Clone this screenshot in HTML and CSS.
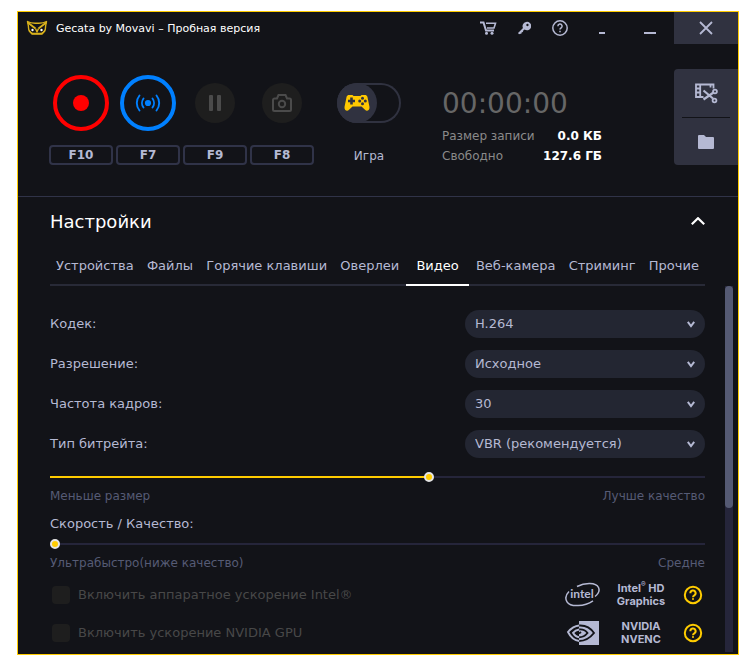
FILE: index.html
```
<!DOCTYPE html>
<html lang="ru">
<head>
<meta charset="utf-8">
<title>Gecata by Movavi – Пробная версия</title>
<link rel="stylesheet" href="styles.css">
</head>
<body>
<main class="window">
  <header class="titlebar">
    <svg class="logo" width="22" height="16" viewBox="0 0 22 16" fill="none" stroke="#d9b21c" stroke-width="1.4" stroke-linejoin="round">
      <path d="M1.500 1.500C5 3.600 7.500 3.200 11 3.200s6 .4 9.500-1.700C20 4 19.500 5.500 19.500 7.500c0 3-1.500 5-4 6H6.500c-2.500-1-4-3-4-6C2.500 5.500 2 4 1.500 1.500z"/>
      <path d="M1.700 2.500l7.800 6M20.300 2.500l-7.800 6" stroke-width="1.800"/>
      <path d="M9.500 8.500L11 12l1.500-3.500M3 10.500l3 3.500h10l3-3.500"/>
      <circle cx="6.500" cy="10" r="1.200" fill="#fff" stroke="none"/>
      <circle cx="15.500" cy="10" r="1.200" fill="#fff" stroke="none"/>
    </svg>
    <h1 class="app-name">Gecata by Movavi – Пробная версия</h1>
    <nav class="window-tools">
      <button class="tool" aria-label="Купить"><svg width="18" height="16" viewBox="0 0 18 16" fill="none" stroke="currentColor" stroke-width="2"><path d="M1 2.500h3.500l2.500 8h8"/><path d="M7 3.300h9.500L15 8H8" stroke-width="1.600"/><circle cx="7.500" cy="13.300" r="1.500" fill="currentColor" stroke="none"/><circle cx="13" cy="13.300" r="1.500" fill="currentColor" stroke="none"/></svg></button>
      <button class="tool" aria-label="Активация"><svg width="14" height="14" viewBox="0 0 14 14"><path fill="currentColor" fill-rule="evenodd" d="M9 1a4.200 4.200 0 1 1-1.400 7.500L5.800 10l.4 1-1.500.3-.2 1.300-2.500.6L1 12l5-5A4.200 4.200 0 0 1 9 1zm1.400 1.800a1.200 1.200 0 1 0 .1 0z"/></svg></button>
      <button class="tool" aria-label="Справка"><svg width="18" height="18" viewBox="0 0 18 18" fill="none" stroke="currentColor" stroke-width="1.500"><circle cx="9" cy="9" r="7.200"/><path d="M6.900 7.200a2.100 2.100 0 1 1 3.100 1.800c-.8.400-1 .8-1 1.600M9 11.800v1.500"/></svg></button>
      <button class="tool" aria-label="Мини-режим"><svg width="14" height="14" viewBox="0 0 14 14"><path fill="currentColor" d="M4 11h6v2H4z"/></svg></button>
      <button class="tool" aria-label="Свернуть"><svg width="14" height="14" viewBox="0 0 14 14"><path fill="currentColor" d="M1 11h12v2H1z"/></svg></button>
    </nav>
    <button class="close" aria-label="Закрыть"><svg width="14" height="14" viewBox="0 0 14 14" fill="none" stroke="currentColor" stroke-width="1.800"><path d="M1 1l12 12M13 1L1 13"/></svg></button>
  </header>

  <section class="recorder">
    <div class="actions">
      <div class="action">
        <button class="round record" aria-label="Запись"><svg width="16" height="16" viewBox="0 0 16 16"><circle cx="8" cy="8" r="8" fill="currentColor"/></svg></button>
        <button class="key">F10</button>
      </div>
      <div class="action">
        <button class="round stream" aria-label="Стрим"><svg width="26" height="20" viewBox="0 0 26 20" fill="none" stroke="currentColor" stroke-width="1.900" stroke-linecap="round"><circle cx="13" cy="10" r="3.100" fill="currentColor" stroke="none"/><path d="M8.500 5.500c-2 2.600-2 6.400 0 9M17.500 5.500c2 2.600 2 6.400 0 9M4.500 2.500c-3.600 4.400-3.600 10.600 0 15M21.500 2.500c3.600 4.400 3.600 10.600 0 15"/></svg></button>
        <button class="key">F7</button>
      </div>
      <div class="action">
        <button class="round muted" aria-label="Пауза"><svg width="12" height="16" viewBox="0 0 12 16" fill="currentColor"><rect width="4" height="16" rx="1"/><rect x="8" width="4" height="16" rx="1"/></svg></button>
        <button class="key">F9</button>
      </div>
      <div class="action">
        <button class="round muted" aria-label="Снимок"><svg width="20" height="18" viewBox="0 0 20 18" fill="none" stroke="currentColor" stroke-width="2"><path d="M1 6a1.500 1.500 0 0 1 1.500-1.500H5L6.500 1h7L15 4.500h2.500A1.500 1.500 0 0 1 19 6v9.500a1.500 1.500 0 0 1-1.500 1.500h-15A1.500 1.500 0 0 1 1 15.500z"/><circle cx="10" cy="10" r="3.200"/></svg></button>
        <button class="key">F8</button>
      </div>
    </div>
    <div class="mode">
      <button class="toggle" role="switch" aria-checked="false" aria-labelledby="mode-name"><span class="knob"><svg width="26" height="18" viewBox="0 0 26 18"><path fill="#ffc800" d="M5 1h3.500l1 1h7l1-1H21c1 0 2 .6 2.400 1.800L25.500 13c.4 3-2.500 5-4.500 2.800L17.500 12.500h-9L5 15.800C3 18 .1 16 .5 13L2.600 2.800C3 1.600 4 1 5 1z"/><path d="M7.500 3.500v7M4 7h7" stroke="#303240" stroke-width="2.600"/><g fill="#303240"><circle cx="18.500" cy="4.200" r="1.500"/><circle cx="18.500" cy="9.800" r="1.500"/><circle cx="15.700" cy="7" r="1.500"/><circle cx="21.300" cy="7" r="1.500"/></g></svg></span></button>
      <span class="mode-name" id="mode-name">Игра</span>
    </div>
    <div class="status">
      <time class="timer">00:00:00</time>
      <dl class="stats">
        <dt>Размер записи</dt><dd>0.0 КБ</dd>
        <dt>Свободно</dt><dd>127.6 ГБ</dd>
      </dl>
    </div>
    <div class="side">
      <button class="side-button" aria-label="Редактор"><svg width="24" height="22" viewBox="0 0 24 22" fill="none" stroke="currentColor" stroke-width="1.800"><path d="M19.500 6.500V2.500H2v12.500h7.500M6.200 2.500V15M2 6.500h4M2 10.500h4M16.500 2.500v3"/><path d="M9.500 8.500l9.500 8M9.500 17.500l10-7" stroke-width="2.200"/><circle cx="21" cy="9.500" r="1.900"/><circle cx="20.500" cy="18.500" r="1.900"/></svg></button>
      <button class="side-button" aria-label="Папка"><svg width="16" height="14" viewBox="0 0 16 14"><path fill="currentColor" d="M1 0h5l2 2h7a1 1 0 0 1 1 1v10a1 1 0 0 1-1 1H1a1 1 0 0 1-1-1V1a1 1 0 0 1 1-1z"/></svg></button>
    </div>
  </section>

  <section class="settings">
    <div class="settings-head">
      <h2>Настройки</h2>
      <button class="collapse" aria-label="Скрыть настройки"><svg width="14" height="10" viewBox="0 0 14 10" fill="none" stroke="currentColor" stroke-width="2.200"><path d="M.8 7.200L7 1.200l6.200 6"/></svg></button>
    </div>
    <nav class="tabs">
      <a href="#">Устройства</a>
      <a href="#">Файлы</a>
      <a href="#">Горячие клавиши</a>
      <a href="#">Оверлеи</a>
      <a href="#" class="active">Видео</a>
      <a href="#">Веб-камера</a>
      <a href="#">Стриминг</a>
      <a href="#">Прочие</a>
    </nav>
    <div class="panel">
      <form class="form">
        <div class="field">
          <label for="codec">Кодек:</label>
          <div class="select"><select id="codec"><option>H.264</option></select><svg width="8" height="8" viewBox="0 0 8 8"><path d="M.8 1.800L4 6l3.200-4.200"/></svg></div>
        </div>
        <div class="field">
          <label for="resolution">Разрешение:</label>
          <div class="select"><select id="resolution"><option>Исходное</option></select><svg width="8" height="8" viewBox="0 0 8 8"><path d="M.8 1.800L4 6l3.200-4.200"/></svg></div>
        </div>
        <div class="field">
          <label for="fps">Частота кадров:</label>
          <div class="select"><select id="fps"><option>30</option></select><svg width="8" height="8" viewBox="0 0 8 8"><path d="M.8 1.800L4 6l3.200-4.200"/></svg></div>
        </div>
        <div class="field">
          <label for="bitrate">Тип битрейта:</label>
          <div class="select"><select id="bitrate"><option>VBR (рекомендуется)</option></select><svg width="8" height="8" viewBox="0 0 8 8"><path d="M.8 1.800L4 6l3.200-4.200"/></svg></div>
        </div>
        <input type="range" class="range" min="0" max="100" value="58" style="--fill: 58%" aria-label="Качество">
        <div class="scale"><span>Меньше размер</span><span>Лучше качество</span></div>
        <label class="speed-label" for="speed">Скорость / Качество:</label>
        <input type="range" class="range" id="speed" min="0" max="100" value="0" style="--fill: 0%">
        <div class="scale"><span>Ультрабыстро(ниже качество)</span><span>Средне</span></div>
        <div class="option">
          <label><input type="checkbox" disabled>Включить аппаратное ускорение Intel®</label>
          <svg class="brand" width="36" height="26" viewBox="0 0 36 26" fill="none" stroke="currentColor" stroke-width="1.500"><path d="M12 4.500C20 .5 31 .3 33.500 5.500c1.300 3-.2 6.500-3.500 9M4 9.500C.5 13 .3 17 2 19.800c3.500 5.700 17.500 4.700 26-1"/><text x="17" y="16" text-anchor="middle" fill="currentColor" stroke="none">intel</text></svg>
          <span class="brand-name">Intel<sup>®</sup> HD<br>Graphics</span>
          <button type="button" class="help" aria-label="Подробнее"><svg width="20" height="20" viewBox="0 0 20 20"><circle cx="10" cy="10" r="8.200"/><path d="M7.400 8.200a2.600 2.600 0 1 1 3.900 2.100c-1 .6-1.300 1-1.300 1.900M10 13.200v1.600"/></svg></button>
        </div>
        <div class="option">
          <label><input type="checkbox" disabled>Включить ускорение NVIDIA GPU</label>
          <svg class="brand" width="36" height="26" viewBox="0 0 36 26" fill="none"><path fill="currentColor" d="M14 1h20v24H14z"/><g stroke-width="1.900"><path stroke="#121318" d="M14 5.500c7-.5 12 3 15 7.500-4 5-9 8-15 8M14 9.500c4-.5 7 1.500 8.500 3.500-2 2.500-5 4.300-8.500 4.300"/><path stroke="currentColor" d="M14.200 5.500C9 6 5.500 9 3 12c2.500 5 6.500 8.500 11.200 9M14.200 9.500c-3 .3-5 1.800-6.200 3.300 1.500 2.700 3.700 4.200 6.200 4.500"/><path stroke="#121318" d="M14 13.500l2-1.500"/></g></svg>
          <span class="brand-name">NVIDIA<br>NVENC</span>
          <button type="button" class="help" aria-label="Подробнее"><svg width="20" height="20" viewBox="0 0 20 20"><circle cx="10" cy="10" r="8.200"/><path d="M7.400 8.200a2.600 2.600 0 1 1 3.900 2.100c-1 .6-1.300 1-1.300 1.900M10 13.200v1.600"/></svg></button>
        </div>
      </form>
      <div class="scrollbar"><div class="thumb"></div></div>
    </div>
  </section>
</main>
</body>
</html>
```
FILE: styles.css
```
* {
  box-sizing: border-box;
}

body {
  margin: 0;
  padding: 11px 16px 8px 17px;
  background: #fff;
  color: #b5b9d3;
  font: 12px/16px "DejaVu Sans", sans-serif;
}

button {
  display: flex;
  align-items: center;
  justify-content: center;
  padding: 0;
  border: 0;
  background: none;
  color: inherit;
  font: inherit;
}

.window {
  border: 1px solid #ffcc00;
  background: #121318;
}

/* Title bar */
.titlebar {
  display: flex;
  align-items: center;
  height: 32px;
  padding-left: 8px;
}

.app-name {
  margin: 0 auto 0 8px;
  padding-top: 2px;
  color: #fff;
  font-size: 11px;
  font-weight: normal;
}

.window-tools {
  display: flex;
  align-items: center;
}

.tool {
  width: 36px;
  height: 32px;
}

.tool:nth-child(n+4) {
  width: 48px;
}

.close {
  width: 64px;
  height: 32px;
  background: #303240;
}

/* Recorder */
.recorder {
  display: flex;
  align-items: flex-start;
  height: 153px;
  padding: 25px 0 0 31px;
  border-bottom: 1px solid #303348;
}

.actions {
  display: flex;
  gap: 3px;
}

.action {
  display: flex;
  flex-direction: column;
  align-items: center;
  width: 64px;
  height: 96px;
  padding-top: 6px;
}

.round {
  width: 56px;
  height: 56px;
  border: 4px solid;
  border-radius: 50%;
}

.record {
  color: #ff0000;
}

.stream {
  color: #0080ff;
}

.muted {
  width: 40px;
  height: 40px;
  margin-top: 8px;
  border: 0;
  background: #1e1e1e;
  color: #4b4b4b;
}

.key {
  width: 64px;
  height: 20px;
  margin-top: auto;
  border: 2px solid #303348;
  border-radius: 4px;
  font-weight: bold;
}

.mode {
  display: flex;
  flex-direction: column;
  align-items: center;
  justify-content: space-between;
  height: 95px;
  margin-left: 23px;
  padding-top: 14px;
}

.toggle {
  justify-content: flex-start;
  width: 64px;
  height: 40px;
  border-radius: 20px;
  box-shadow: inset 0 0 0 2px #303240;
}

.knob {
  display: flex;
  align-items: center;
  justify-content: center;
  width: 40px;
  height: 40px;
  border-radius: 50%;
  background: #303240;
}

.status {
  width: 160px;
  margin-left: 41px;
  padding-top: 19px;
}

.timer {
  display: block;
  color: #666;
  font-size: 28px;
  line-height: 32px;
}

.stats {
  display: grid;
  grid-template-columns: auto auto;
  justify-content: space-between;
  margin: 6px 0 0;
  color: #8a8a8a;
  line-height: 20px;
}

.stats dd {
  margin: 0;
  color: #fff;
  font-weight: bold;
  text-align: right;
}

.side {
  width: 64px;
  margin-left: auto;
  border-radius: 4px 0 0 4px;
  background: #303240;
}

.side-button {
  width: 48px;
  height: 48px;
  margin: 0 auto;
}

.side-button + .side-button {
  border-top: 1px solid #121318;
}

/* Settings */
.settings {
  padding-left: 32px;
}

.settings-head {
  display: flex;
  align-items: center;
  justify-content: space-between;
  height: 49px;
  padding-right: 33px;
}

h2 {
  margin: 0;
  color: #fff;
  font-size: 18px;
  font-weight: normal;
}

.collapse {
  color: #fff;
}

.tabs {
  display: flex;
  justify-content: space-between;
  height: 40px;
  margin-right: 33px;
  border-bottom: 2px solid #282a37;
  font-size: 13px;
}

.tabs a {
  height: 40px;
  padding: 0 6px;
  color: inherit;
  line-height: 40px;
  text-decoration: none;
  white-space: nowrap;
}

.tabs .active {
  padding: 0 10px;
  border-bottom: 2px solid #fff;
  color: #fff;
}

.panel {
  display: flex;
  padding-right: 5px;
}

.form {
  flex: 1;
  padding: 24px 20px 2px 0;
  font-size: 13px;
}

.field {
  display: flex;
  align-items: center;
  justify-content: space-between;
  margin-bottom: 12px;
}

.select {
  display: grid;
  align-items: center;
  width: 240px;
}

.select select,
.select svg {
  grid-area: 1 / 1;
}

.select select {
  height: 28px;
  padding: 0 10px;
  border: 0;
  border-radius: 14px;
  background: #232632;
  color: inherit;
  font: inherit;
  appearance: none;
}

.select svg {
  justify-self: end;
  margin-right: 10px;
  fill: none;
  stroke: currentColor;
  stroke-width: 2;
  pointer-events: none;
}

.range {
  display: block;
  width: 100%;
  height: 14px;
  margin: 0;
  background: linear-gradient(to right, #ffcc00 var(--fill), #25253a var(--fill)) center / 100% 2px no-repeat;
  appearance: none;
}

.range::-webkit-slider-thumb {
  width: 10px;
  height: 10px;
  border: 2px solid #e4e4e4;
  border-radius: 50%;
  background: #ffcc00;
  appearance: none;
}

.scale {
  display: flex;
  justify-content: space-between;
  margin-top: 4px;
  color: #565b75;
  font-size: 12px;
}

.speed-label {
  display: block;
  margin: 12px 0 5px;
}

.option {
  display: flex;
  align-items: center;
  height: 38px;
}

.scale + .option {
  margin-top: 5px;
}

.option label {
  display: flex;
  flex: 1;
  align-items: center;
  gap: 8px;
  color: #484848;
}

.option input {
  width: 18px;
  height: 18px;
  margin: 0 0 0 2px;
  border-radius: 4px;
  background: #1e1e1e;
  appearance: none;
}

.brand text {
  font: bold 12px "Lato", sans-serif;
}

.brand-name {
  width: 64px;
  margin: 0 10px 0 8px;
  font: bold 11px/13px "Inter", sans-serif;
  text-align: center;
}

.brand-name sup {
  font-size: 7px;
  line-height: 0;
}

.help {
  margin-right: 2px;
  color: #ffcc00;
}

.help svg {
  fill: none;
  stroke: currentColor;
  stroke-width: 2;
}

.scrollbar {
  width: 8px;
  margin-bottom: 2px;
  background: #25253a;
}

.thumb {
  height: 222px;
  border-radius: 4px;
  background: #555a73;
}
```
